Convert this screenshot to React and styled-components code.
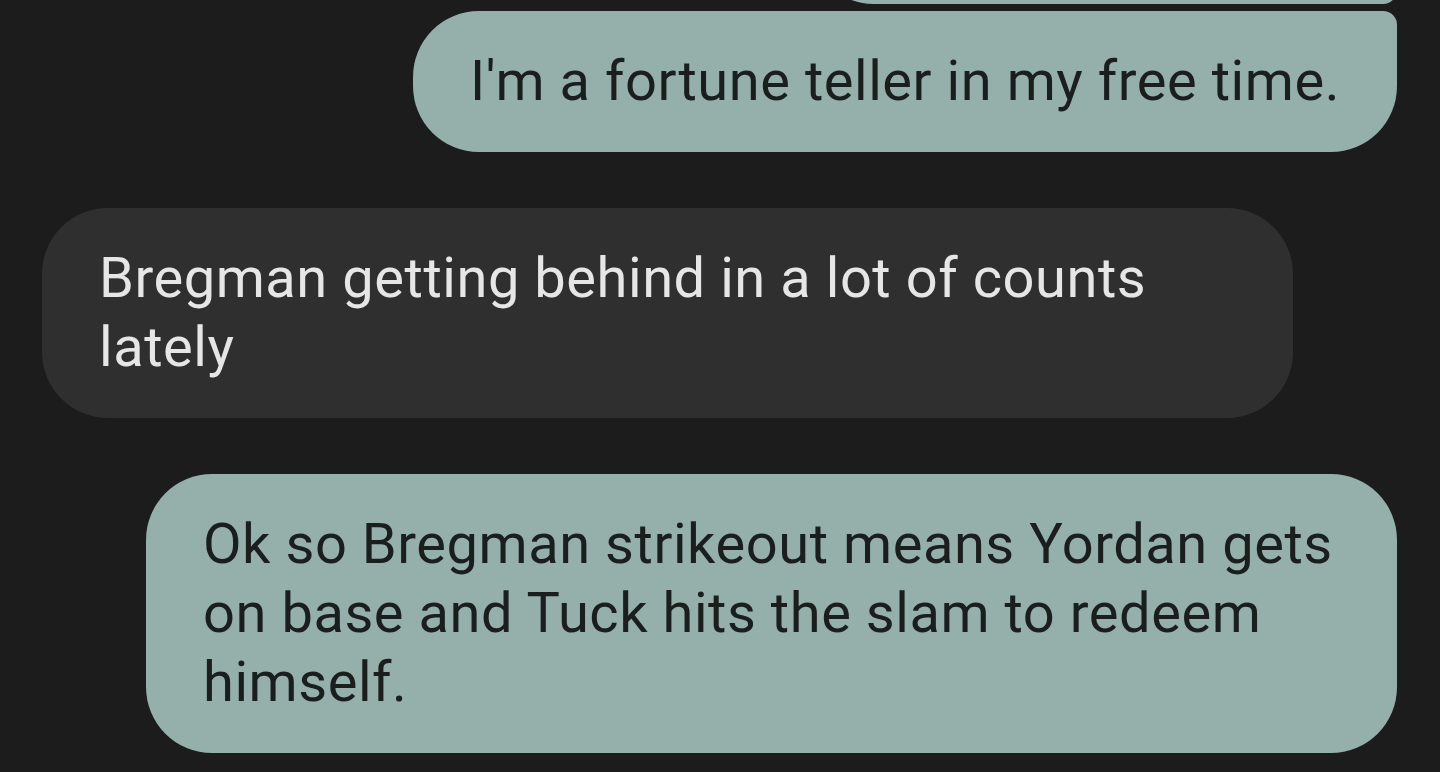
import React from 'react'
import styled, { createGlobalStyle, css } from 'styled-components'

const messages = [
  { id: 1, from: 'me', text: 'It happens tonight.', group: 'top' },
  { id: 2, from: 'me', text: "I'm a fortune teller in my free time.", group: 'bottom' },
  { id: 3, from: 'them', text: 'Bregman getting behind in a lot of counts lately' },
  {
    id: 4,
    from: 'me',
    text: 'Ok so Bregman strikeout means Yordan gets on base and Tuck hits the slam to redeem himself.'
  }
]

const App = () => {
  return (
    <>
      <GlobalStyle />
      <Thread>
        {messages.map((m) => (
          <Row key={m.id} $mine={m.from === 'me'} $group={m.group}>
            <Bubble $mine={m.from === 'me'} $group={m.group}>
              {m.text}
            </Bubble>
          </Row>
        ))}
      </Thread>
    </>
  )
}

const GlobalStyle = createGlobalStyle`
  html, body {
    margin: 0;
    padding: 0;
    background: #1c1c1c;
  }
  body {
    font-family: Roboto, 'Noto Sans', sans-serif;
  }
`

const Thread = styled.div`
  height: 772px;
  overflow: hidden;
  display: flex;
  flex-direction: column;
  justify-content: flex-end;
  padding: 0 43px 19px 42px;
  box-sizing: border-box;
`

const Row = styled.div`
  display: flex;
  flex-shrink: 0;
  justify-content: ${(p) => (p.$mine ? 'flex-end' : 'flex-start')};
  margin-top: 56px;
  ${(p) =>
    p.$group === 'bottom' &&
    css`
      margin-top: 7px;
    `}
`

const Bubble = styled.div`
  max-width: 1251px;
  box-sizing: border-box;
  padding: 36px 57px;
  border-radius: 66px;
  font-size: 56px;
  line-height: 69px;
  letter-spacing: 0.55px;
  background: ${(p) => (p.$mine ? '#95b0ab' : '#2f2f2f')};
  color: ${(p) => (p.$mine ? '#1a1e1d' : '#e6e6e6')};
  ${(p) =>
    p.$group === 'top' &&
    css`
      border-bottom-right-radius: 14px;
    `}
  ${(p) =>
    p.$group === 'bottom' &&
    css`
      border-top-right-radius: 14px;
    `}
`

export default App
